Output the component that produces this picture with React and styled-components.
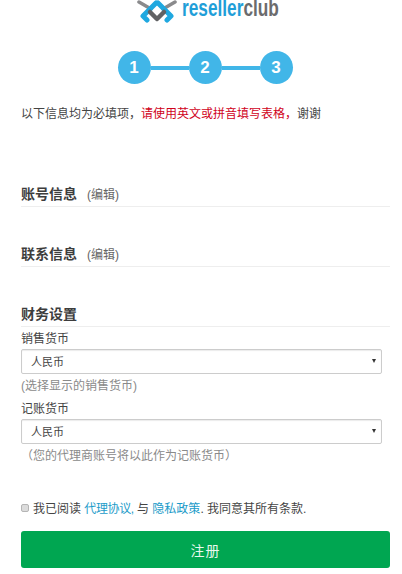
import React from 'react'
import styled, { createGlobalStyle } from 'styled-components'

const GlobalStyle = createGlobalStyle`
  html, body {
    margin: 0;
    padding: 0;
    background: #fff;
    font-family: "Liberation Sans", "Noto Sans CJK SC", sans-serif;
    color: #333;
  }
`

const Page = styled.div`
  width: 402px;
  height: 574px;
  overflow: hidden;
  box-sizing: border-box;
  padding: 0 12px 0 21px;
`

const LogoRow = styled.div`
  height: 23px;
  display: flex;
  align-items: flex-start;
  gap: 4px;
  padding-left: 115px;
`

const LogoText = styled.div`
  width: 96px;
  font-size: 23px;
  line-height: 17px;
  font-weight: 700;
  white-space: nowrap;
  color: #1f9ed8;
  transform: scaleX(0.75);
  transform-origin: left top;
  span { color: #6b6b6d; }
`

const Stepper = styled.div`
  display: flex;
  justify-content: center;
  align-items: center;
  margin-top: 28px;
  padding-right: 1px;
`

const StepDot = styled.div`
  width: 33px;
  height: 33px;
  border-radius: 50%;
  background: #41b6e8;
  color: #fff;
  font-size: 17px;
  font-weight: 700;
  display: flex;
  align-items: center;
  justify-content: center;
`

const StepLine = styled.div`
  width: 38px;
  height: 4px;
  background: #41b6e8;
`

const Notice = styled.p`
  margin: 21px 0 0;
  font-size: 12px;
  line-height: 18px;
  color: #444;
  white-space: nowrap;
  b { font-weight: 400; color: #d0021b; }
`

const SectionTitle = styled.div`
  margin-top: ${p => p.$top}px;
  height: 24px;
  border-bottom: 1px solid #eee;
  display: flex;
  align-items: baseline;
  font-size: 14px;
  line-height: 24px;
  font-weight: 700;
  color: #3d3d3d;
  small {
    margin-left: 10px;
    font-size: 12px;
    font-weight: 400;
    color: #666;
  }
`

const FieldLabel = styled.div`
  margin-top: ${p => p.$top || 0}px;
  font-size: 12px;
  line-height: 18px;
  color: #444;
`

const SelectWrap = styled.div`
  position: relative;
  width: 361px;
  margin-top: 1px;
  &::after {
    content: "";
    position: absolute;
    right: 6px;
    top: 10px;
    border-left: 2px solid transparent;
    border-right: 2px solid transparent;
    border-top: 4px solid #333;
  }
`

const Select = styled.select`
  display: block;
  width: 100%;
  height: 25px;
  box-sizing: border-box;
  appearance: none;
  background: #fff;
  border: 1px solid #ccc;
  border-radius: 2px;
  box-shadow: inset 0 1px 1px rgba(0, 0, 0, 0.08);
  padding: 0 9px;
  font-family: inherit;
  font-size: 11px;
  color: #444;
`

const Hint = styled.div`
  margin-top: 3px;
  font-size: 12px;
  line-height: 18px;
  color: #8a8a8a;
`

const AgreeRow = styled.label`
  margin-top: 35px;
  display: flex;
  align-items: center;
  font-size: 12px;
  line-height: 18px;
  color: #444;
  white-space: nowrap;
  a { color: #1c9bc9; text-decoration: none; }
  a:first-of-type { letter-spacing: -0.4px; }
`

const Check = styled.input`
  appearance: none;
  box-sizing: border-box;
  width: 8px;
  height: 8px;
  margin: -2px 4px 0 0;
  background: #dcdcdc;
  border: 1px solid #b5b5b5;
  border-radius: 2px;
`

const SubmitButton = styled.button`
  display: block;
  width: 369px;
  height: 37px;
  margin-top: 13px;
  border: none;
  border-radius: 3px;
  background: #00a651;
  color: #e8f8ef;
  font-family: inherit;
  font-size: 14px;
  letter-spacing: 1px;
`

const LogoMark = () => (
  <svg width="42" height="23" viewBox="0 0 42 23" fill="none" strokeLinecap="round" strokeLinejoin="round">
    <path d="M3 2 L15 9" stroke="#8a8a8c" strokeWidth="3.5" />
    <path d="M39 2 L27 9" stroke="#8a8a8c" strokeWidth="3.5" />
    <path d="M20 3 L7 16 L11 20" stroke="#1fa8e0" strokeWidth="5" />
    <path d="M22 3 L35 16 L31 20" stroke="#1fa8e0" strokeWidth="5" />
    <path d="M14 12 L21 19 L28 12" stroke="#616264" strokeWidth="4.5" />
  </svg>
)

export default function App() {
  return (
    <Page>
      <GlobalStyle />
      <LogoRow>
        <LogoMark />
        <LogoText>reseller<span>club</span></LogoText>
      </LogoRow>

      <Stepper>
        <StepDot>1</StepDot>
        <StepLine />
        <StepDot>2</StepDot>
        <StepLine />
        <StepDot>3</StepDot>
      </Stepper>

      <Notice>
        以下信息均为必填项，<b>请使用英文或拼音填写表格，</b>谢谢
      </Notice>

      <SectionTitle $top={59}>账号信息<small>(编辑)</small></SectionTitle>
      <SectionTitle $top={35}>联系信息<small>(编辑)</small></SectionTitle>
      <SectionTitle $top={35}>财务设置</SectionTitle>

      <FieldLabel $top={3}>销售货币</FieldLabel>
      <SelectWrap>
        <Select defaultValue="cny"><option value="cny">人民币</option></Select>
      </SelectWrap>
      <Hint>(选择显示的销售货币)</Hint>

      <FieldLabel $top={5}>记账货币</FieldLabel>
      <SelectWrap>
        <Select defaultValue="cny"><option value="cny">人民币</option></Select>
      </SelectWrap>
      <Hint>（您的代理商账号将以此作为记账货币）</Hint>

      <AgreeRow>
        <Check type="checkbox" />
        我已阅读&nbsp;<a href="#agreement">代理协议,</a>&nbsp;与&nbsp;<a href="#privacy">隐私政策</a>. 我同意其所有条款.
      </AgreeRow>

      <SubmitButton type="button">注册</SubmitButton>
    </Page>
  )
}
